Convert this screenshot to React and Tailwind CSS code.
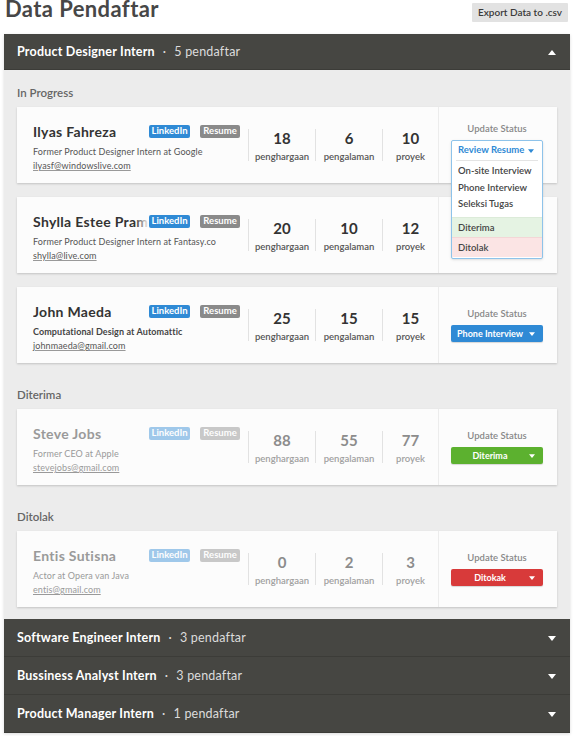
import React from "react";

const font = { fontFamily: "Lato, 'Noto Sans', sans-serif" };

const Caret = ({ className = "", up = false }) => (
  <svg viewBox="0 0 8 5" className={className} fill="currentColor">
    {up ? <polygon points="0,5 8,5 4,0" /> : <polygon points="0,0 8,0 4,5" />}
  </svg>
);

const statusStyles = {
  blue: "bg-[#2f8ad5]",
  green: "bg-[#5cb12f]",
  red: "bg-[#d83a3a]",
};

const inProgress = [
  {
    name: "Ilyas Fahreza",
    role: "Former Product Designer Intern at Google",
    email: "ilyasf@windowslive.com",
    stats: [18, 6, 10],
    status: "Review Resume",
    color: "blue",
    open: true,
  },
  {
    name: "Shylla Estee Pramudita",
    role: "Former Product Designer Intern at Fantasy.co",
    email: "shylla@live.com",
    stats: [20, 10, 12],
    status: "Review Resume",
    color: "blue",
    covered: true,
  },
  {
    name: "John Maeda",
    role: "Computational Design at Automattic",
    email: "johnmaeda@gmail.com",
    stats: [25, 15, 15],
    status: "Phone Interview",
    color: "blue",
    boldRole: true,
  },
];

const accepted = [
  {
    name: "Steve Jobs",
    role: "Former CEO at Apple",
    email: "stevejobs@gmail.com",
    stats: [88, 55, 77],
    status: "Diterima",
    color: "green",
    faded: true,
  },
];

const rejected = [
  {
    name: "Entis Sutisna",
    role: "Actor at Opera van Java",
    email: "entis@gmail.com",
    stats: [0, 2, 3],
    status: "Ditokak",
    color: "red",
    faded: true,
  },
];

const statLabels = ["penghargaan", "pengalaman", "proyek"];
const statWidths = ["w-[67px]", "w-[67px]", "w-[56px]"];

// dropdown yang sedang terbuka pada kartu pertama
const StatusMenu = () => (
  <div className="absolute top-[33px] left-[12px] w-[92px] h-[119px] bg-white border border-[#8ec3ea] rounded-[2px] z-10 shadow-sm">
    <div className="h-[19px] flex items-center justify-between pl-[6px] pr-[8px] text-[9.5px] font-bold text-[#2f8ad5]">
      <span>Review Resume</span>
      <Caret className="w-[6px] h-[4px]" />
    </div>
    <div className="mx-[4px] border-b border-[#e4e4e4]" />
    <div className="pt-[2px] text-[9.5px] font-semibold text-[#444]">
      <div className="h-[16px] leading-[16px] pl-[6px]">On-site Interview</div>
      <div className="h-[17px] leading-[17px] pl-[6px]">Phone Interview</div>
      <div className="h-[16px] leading-[16px] pl-[6px]">Seleksi Tugas</div>
      <div className="mt-[5px] h-[20px] leading-[20px] pl-[6px] bg-[#e5f3e3] border-t border-[#dcebd9]">
        Diterima
      </div>
      <div className="h-[20px] leading-[20px] pl-[6px] bg-[#fbe4e4] border-t border-[#f3d6d6]">
        Ditolak
      </div>
    </div>
  </div>
);

const ApplicantCard = ({ person }) => {
  const faded = person.faded;
  return (
    <div className="flex h-[76px] bg-[#fcfcfc] shadow-[0_1px_2px_rgba(0,0,0,0.18)]">
      {/* info pendaftar */}
      <div className="w-[231px] pl-[16px] pt-[16px]">
        <div className="flex items-center h-[16px]">
          <div className="relative w-[116px] overflow-hidden whitespace-nowrap">
            <span
              className={`text-[14px] font-bold tracking-[0.3px] ${
                faded ? "text-[#9a9a9a]" : "text-[#333]"
              }`}
            >
              {person.name}
            </span>
            <div className="absolute right-0 top-0 h-full w-[14px] bg-gradient-to-r from-transparent to-[#fcfcfc]" />
          </div>
          <span
            className={`h-[13px] w-[41px] flex items-center justify-center rounded-[2px] text-[9.5px] font-bold text-white bg-[#2f8ad5] ${
              faded ? "opacity-45" : ""
            }`}
          >
            LinkedIn
          </span>
          <span
            className={`ml-[10px] h-[13px] w-[40px] flex items-center justify-center rounded-[2px] text-[9.5px] font-bold text-white bg-[#8a8a8a] ${
              faded ? "opacity-45" : ""
            }`}
          >
            Resume
          </span>
        </div>
        <div
          className={`mt-[7px] leading-[12px] text-[9px] tracking-[0.1px] whitespace-nowrap ${
            person.boldRole ? "font-bold" : ""
          } ${faded ? "text-[#9a9a9a]" : person.boldRole ? "text-[#444]" : "text-[#555]"}`}
        >
          {person.role}
        </div>
        <div
          className={`mt-[1px] leading-[13px] text-[9px] tracking-[0.1px] underline decoration-[#999] ${
            faded ? "text-[#9a9a9a]" : "text-[#555]"
          }`}
        >
          {person.email}
        </div>
      </div>

      {/* statistik */}
      <div className="flex items-start pt-[22px]">
        {person.stats.map((n, i) => (
          <div
            key={i}
            className={`${statWidths[i]} h-[32px] border-l border-[#e2e2e2] flex flex-col items-center pt-[1px]`}
          >
            <div
              className={`text-[15px] font-bold leading-[16px] ${
                faded ? "text-[#8c8c8c]" : "text-[#333]"
              }`}
            >
              {n}
            </div>
            <div
              className={`mt-[5px] text-[9.5px] font-semibold leading-[12px] ${
                faded ? "text-[#a0a0a0]" : "text-[#555]"
              }`}
            >
              {statLabels[i]}
            </div>
          </div>
        ))}
      </div>

      {/* update status */}
      <div
        className={`relative flex-1 border-l border-[#ececec] pl-[12px] ${
          person.open ? "pt-[16px]" : "pt-[21px]"
        }`}
      >
        <div className={`w-[92px] flex flex-col items-center ${person.covered ? "invisible" : ""}`}>
          <div className="text-[9.5px] font-semibold leading-[12px] text-[#888]">Update Status</div>
          {!person.open && (
            <div
              className={`mt-[5px] w-[92px] h-[17px] rounded-[2px] flex items-center text-white shadow-[0_1px_1px_rgba(0,0,0,0.15)] ${statusStyles[person.color]}`}
            >
              <span className="flex-1 text-center text-[9px] font-bold">{person.status}</span>
              <Caret className="w-[6px] h-[4px] mr-[8px]" />
            </div>
          )}
        </div>
        {person.open && <StatusMenu />}
      </div>
    </div>
  );
};

const Section = ({ title, people, first }) => (
  <div className={first ? "" : "mt-[26px]"}>
    <div className="h-[12px] leading-[12px] text-[11.5px] font-semibold text-[#666]">{title}</div>
    <div className="mt-[8px] flex flex-col gap-[14px]">
      {people.map((p) => (
        <ApplicantCard key={p.name} person={p} />
      ))}
    </div>
  </div>
);

const JobHeader = ({ title, count, open }) => (
  <div className="h-[38px] first:h-[36px] bg-[#464642] border-b border-[#3c3c38] flex items-center justify-between pl-[13px] pr-[14px] pt-[2px] text-white">
    <div className="flex items-center text-[12.5px] tracking-[0.2px]">
      <span className="font-bold">{title}</span>
      <span className="mx-[8px] text-[#dcdcdc]">·</span>
      <span className="text-[#dcdcdc]">{count} pendaftar</span>
    </div>
    <Caret up={open} className="w-[8px] h-[5px]" />
  </div>
);

export default function App() {
  return (
    <div className="w-[574px] h-[736px] bg-white overflow-hidden" style={font}>
      <div className="h-[34px] flex items-start justify-between pl-[5px] pr-[6px]">
        <h1 className="-mt-[3px] text-[22px] leading-[24px] font-bold tracking-[0.4px] text-[#474747]">
          Data Pendaftar
        </h1>
        <button className="mt-[3px] w-[96px] h-[19px] bg-[#e2e2e2] text-[10px] font-semibold text-[#3a3a3a] rounded-[1px]">
          Export Data to .csv
        </button>
      </div>

      <div className="mx-[4px] shadow-[0_1px_3px_rgba(0,0,0,0.15)]">
        <JobHeader title="Product Designer Intern" count={5} open />
        <div className="bg-[#ececec] px-[13px] pt-[17px] pb-[12px]">
          <Section title="In Progress" people={inProgress} first />
          <Section title="Diterima" people={accepted} />
          <Section title="Ditolak" people={rejected} />
        </div>
        <JobHeader title="Software Engineer Intern" count={3} />
        <JobHeader title="Bussiness Analyst Intern" count={3} />
        <JobHeader title="Product Manager Intern" count={1} />
      </div>
    </div>
  );
}
